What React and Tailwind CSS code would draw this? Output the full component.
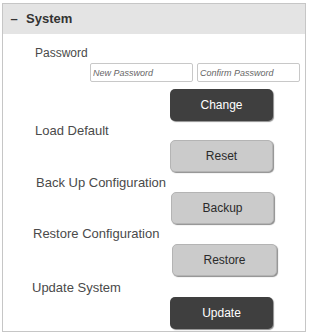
import React from "react";

const font = { fontFamily: '"Liberation Sans", Arial, sans-serif' };

function DarkButton({ children, className = "" }) {
  return (
    <button
      type="button"
      className={`h-[32px] w-[103px] rounded-[5px] bg-[#3f3f3f] text-[12px] text-white shadow-[1px_1px_1px_rgba(0,0,0,0.45)] ${className}`}
    >
      {children}
    </button>
  );
}

function LightButton({ children, className = "" }) {
  return (
    <button
      type="button"
      className={`h-[32px] w-[103px] rounded-[5px] border border-[#b4b4b4] bg-[#cbcbcb] text-[12px] text-[#2a2a2a] shadow-[1px_1px_1px_rgba(0,0,0,0.45)] ${className}`}
    >
      {children}
    </button>
  );
}

export default function App() {
  return (
    <div className="h-[336px] w-[313px] bg-white pl-[2px] pt-[3px]" style={font}>
      <div className="flex h-[329px] w-[304px] flex-col border border-[#c6c6c6]">
        {/* header */}
        <div className="flex h-[30px] items-center gap-[7px] bg-[#e4e4e4] pl-[6px] text-[13px] font-bold text-[#333]">
          <span className="w-[10px] text-center">–</span>
          <span>System</span>
        </div>

        <div className="flex flex-col text-[#4a4a4a]">
          <div className="mt-[12px] pl-[32px] text-[12px] leading-[15px]">Password</div>

          <div className="mt-[2px] flex gap-[4px] pl-[87px]">
            <input
              className="h-[19px] w-[103px] rounded-[2px] border border-[#c8c8c8] px-[2px] text-[9px] italic placeholder:text-[#666]"
              placeholder="New Password"
            />
            <input
              className="h-[19px] w-[103px] rounded-[2px] border border-[#c8c8c8] px-[2px] text-[9px] italic placeholder:text-[#666]"
              placeholder="Confirm Password"
            />
          </div>

          <div className="mt-[7px] pl-[167px]">
            <DarkButton>Change</DarkButton>
          </div>

          <div className="mt-[2px] pl-[32px] text-[13px] leading-[15px]">Load Default</div>
          <div className="mt-[2px] pl-[167px]">
            <LightButton>Reset</LightButton>
          </div>

          <div className="mt-[3px] pl-[33px] text-[13px] leading-[15px]">Back Up Configuration</div>
          <div className="mt-[2px] pl-[168px]">
            <LightButton>Backup</LightButton>
          </div>

          <div className="mt-[2px] pl-[30px] text-[13px] leading-[15px]">Restore Configuration</div>
          <div className="mt-[3px] pl-[169px]">
            <LightButton className="w-[105px]">Restore</LightButton>
          </div>

          <div className="mt-[4px] pl-[29px] text-[13px] leading-[15px]">Update System</div>
          <div className="mt-[2px] pl-[167px]">
            <DarkButton>Update</DarkButton>
          </div>
        </div>
      </div>
    </div>
  );
}
